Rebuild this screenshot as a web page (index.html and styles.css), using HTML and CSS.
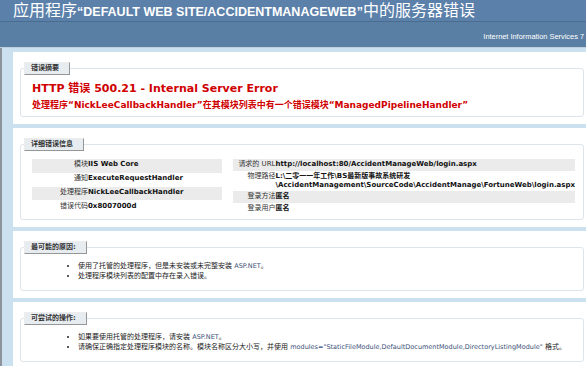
FILE: index.html
```html
<!DOCTYPE html>
<html lang="zh-CN">
<head>
  <meta charset="UTF-8" />
  <title>IIS 7.5 详细错误 - 500.21 - Internal Server Error</title>
  <link rel="stylesheet" href="styles.css">
</head>
<body>
  <div class="header">
    <h1>应用程序<b>“DEFAULT WEB SITE/ACCIDENTMANAGEWEB”</b>中的服务器错误</h1>
  </div>
  <div class="server-version">Internet Information Services 7</div>

  <div class="content">
    <div class="box">
      <fieldset>
        <legend>错误摘要</legend>
        <h2>HTTP 错误 500.21 - Internal Server Error</h2>
        <h3>处理程序“NickLeeCallbackHandler”在其模块列表中有一个错误模块“ManagedPipelineHandler”</h3>
      </fieldset>
    </div>

    <div class="box">
      <fieldset>
        <legend>详细错误信息</legend>
        <div class="details">
          <table class="details-left">
            <tr class="alt"><th>模块</th><td>IIS Web Core</td></tr>
            <tr><th>通知</th><td>ExecuteRequestHandler</td></tr>
            <tr class="alt"><th>处理程序</th><td>NickLeeCallbackHandler</td></tr>
            <tr><th>错误代码</th><td>0x8007000d</td></tr>
          </table>
          <table class="details-right">
            <tr class="alt"><th>请求的 URL</th><td>http://localhost:80/AccidentManageWeb/login.aspx</td></tr>
            <tr><th>物理路径</th><td>L:\二零一一年工作\BS最新版事故系统研发<br>\AccidentManagement\SourceCode\AccidentManage\FortuneWeb\login.aspx</td></tr>
            <tr class="alt"><th>登录方法</th><td>匿名</td></tr>
            <tr><th>登录用户</th><td>匿名</td></tr>
          </table>
        </div>
      </fieldset>
    </div>

    <div class="box">
      <fieldset>
        <legend>最可能的原因:</legend>
        <ul>
          <li>使用了托管的处理程序，但是未安装或未完整安装 <span class="code">ASP.NET</span>。</li>
          <li>处理程序模块列表的配置中存在录入错误。</li>
        </ul>
      </fieldset>
    </div>

    <div class="box">
      <fieldset>
        <legend>可尝试的操作:</legend>
        <ul>
          <li>如果要使用托管的处理程序，请安装 <span class="code">ASP.NET</span>。</li>
          <li>请确保正确指定处理程序模块的名称。模块名称区分大小写，并使用 <span class="code">modules="StaticFileModule,DefaultDocumentModule,DirectoryListingModule"</span> 格式。</li>
        </ul>
      </fieldset>
    </div>
  </div>
</body>
</html>
```

FILE: styles.css
```css
html,
body {
  margin: 0;
}

body {
  background: #cbe1ef;
  font-family: "DejaVu Sans", Verdana, "Noto Sans CJK SC", sans-serif;
  font-size: 7px;
  color: #333;
  overflow: hidden;
}

.header {
  background: #5b80aa;
  height: 21px;
}

.header h1 {
  margin: 0;
  padding-left: 13px;
  font-family: "Liberation Sans", "Noto Sans CJK SC", sans-serif;
  font-size: 16px;
  line-height: 21px;
  font-weight: normal;
  color: #fff;
  white-space: nowrap;
}

.header h1 b {
  font-size: 12.5px;
  font-weight: bold;
}

.server-version {
  background: #5a7fa5;
  border-top: 1px solid #4a6c8e;
  border-bottom: 1px solid #c1cfdd;
  height: 15px;
  padding: 10px 2px 0 0;
  font-family: "Liberation Sans", sans-serif;
  font-size: 7.4px;
  line-height: 9px;
  color: #fff;
  text-align: right;
  white-space: nowrap;
}

.content {
  border-left: 2px solid #8d949b;
  padding: 4px 0 0 11px;
}

.box {
  background: #fff;
  padding: 10px 0 7px 7px;
  margin-bottom: 4px;
}

fieldset {
  width: 564px;
  box-sizing: border-box;
  margin: 0;
  padding: 0 8px 5px 11px;
  border: 1px solid #dde4ea;
  border-radius: 3px;
}

legend {
  margin-left: -8px;
  padding: 1px 10px 1px 6px;
  border-top: 1px solid #ededed;
  border-left: 1px solid #ededed;
  border-right: 1px solid #969696;
  border-bottom: 1px solid #969696;
  background: #e7ecf0;
  font-weight: bold;
  line-height: 9px;
  color: #333;
}

h2 {
  margin: 7px 0 0;
  font-size: 11px;
  line-height: 13px;
  color: #d00000;
}

h3 {
  margin: 5px 0 0;
  font-size: 9px;
  line-height: 11px;
  color: #d00000;
}

.details {
  display: flex;
  gap: 11px;
  margin-top: 8px;
}

table {
  border-collapse: collapse;
  border-spacing: 0;
}

.details-left {
  width: 190px;
}

.details-right {
  width: 342px;
}

th,
td {
  padding: 1.25px 0;
  line-height: 9px;
  vertical-align: top;
  white-space: nowrap;
}

th {
  text-align: right;
  font-weight: normal;
  color: #333;
}

td {
  font-weight: bold;
  color: #111;
}

.details-left th {
  width: 56px;
}

.details-right th {
  width: 52px;
}

tr.alt th,
tr.alt td {
  background: #ebebeb;
}

ul {
  margin: 7px 0 4px;
  padding-left: 46px;
  color: #222;
}

li {
  line-height: 10px;
}

.code {
  font-size: 6.5px;
  color: #3a4f78;
}
```
